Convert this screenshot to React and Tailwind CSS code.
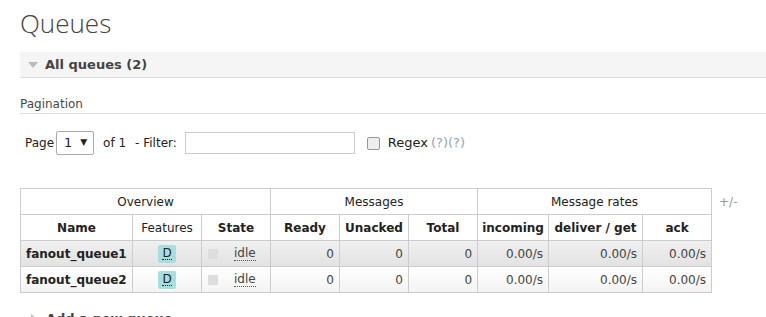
const font = { fontFamily: '"DejaVu Sans", Verdana, sans-serif' };

const queues = [
  { name: 'fanout_queue1', ready: 0, unacked: 0, total: 0, incoming: '0.00/s', deliver: '0.00/s', ack: '0.00/s' },
  { name: 'fanout_queue2', ready: 0, unacked: 0, total: 0, incoming: '0.00/s', deliver: '0.00/s', ack: '0.00/s' },
];

const cell = 'border border-[#ccc] h-[26px] px-[5px] whitespace-nowrap overflow-hidden';

export default function App() {
  return (
    <div className="w-[766px] h-[317px] overflow-hidden bg-white text-[#484848] text-[12px]" style={font}>
      <div className="pl-5">
        <h1 className="pt-[6px] h-[52px] text-[26px] font-light text-[#444] leading-[34px]" style={{ fontFamily: '"Open Sans", sans-serif' }}>
          Queues
        </h1>

        {/* All queues header */}
        <div className="h-[26px] bg-[#f5f5f5] border-b border-[#ddd] flex items-center pl-[8px]">
          <span className="w-0 h-0 border-l-[5px] border-r-[5px] border-t-[6px] border-l-transparent border-r-transparent border-t-[#bbb] mr-[7px]" />
          <span className="font-bold text-[13px] text-[#444]">All queues (2)</span>
        </div>

        {/* Pagination */}
        <div className="mt-[16px] h-[20px] border-b border-[#ddd] text-[12px] leading-[20px] text-[#484848]">
          Pagination
        </div>

        <div className="mt-[17px] flex items-center h-[24px] pl-[5px] text-[#222] text-[12px]">
          <span>Page</span>
          <div className="ml-[2px] w-[38px] h-[24px] border border-[#aaa] rounded-[2px] flex items-center justify-between pl-[7px] pr-[6px] text-[13px]">
            <span>1</span>
            <span className="text-[9px]">▼</span>
          </div>
          <span className="ml-[9px]">of 1</span>
          <span className="ml-[9px]">- Filter:</span>
          <div className="ml-[8px] w-[170px] h-[22px] border border-[#ccc]" />
          <div className="ml-[12px] w-[13px] h-[13px] border border-[#999] rounded-[2px] bg-[#eee]" />
          <span className="ml-[8px] text-[13px]">Regex</span>
          <span className="ml-[3px] text-[13px] text-[#94a3b8]">(?)(?)</span>
        </div>

        {/* Table */}
        <div className="mt-[33px] flex items-start">
          <table className="border-collapse table-fixed w-[691px] text-[12px] text-[#222]">
            <colgroup>
              <col className="w-[112px]" />
              <col className="w-[69px]" />
              <col className="w-[69px]" />
              <col className="w-[69px]" />
              <col className="w-[69px]" />
              <col className="w-[69px]" />
              <col className="w-[71px]" />
              <col className="w-[94px]" />
              <col className="w-[69px]" />
            </colgroup>
            <thead>
              <tr>
                <th colSpan={3} className={`${cell} font-normal text-center`}>Overview</th>
                <th colSpan={3} className={`${cell} font-normal text-center`}>Messages</th>
                <th colSpan={3} className={`${cell} font-normal text-center`}>Message rates</th>
              </tr>
              <tr>
                <th className={`${cell} font-bold text-center`}>Name</th>
                <th className={`${cell} font-normal text-center`}>Features</th>
                <th className={`${cell} font-bold text-center`}>State</th>
                <th className={`${cell} font-bold text-center`}>Ready</th>
                <th className={`${cell} font-bold text-center`}>Unacked</th>
                <th className={`${cell} font-bold text-center`}>Total</th>
                <th className="border border-[#ccc] h-[26px] px-0 font-bold text-center whitespace-nowrap">incoming</th>
                <th className={`${cell} font-bold text-center`}>deliver / get</th>
                <th className={`${cell} font-bold text-center`}>ack</th>
              </tr>
            </thead>
            <tbody>
              {queues.map((q, i) => (
                <tr
                  key={q.name}
                  className={i === 0 ? 'bg-gradient-to-b from-[#f0f0f0] to-[#e2e2e2]' : 'bg-gradient-to-b from-[#ffffff] to-[#f3f3f3]'}
                >
                  <td className={`${cell} font-bold`}>{q.name}</td>
                  <td className={`${cell} text-center`}>
                    <span className="inline-flex items-center justify-center w-[18px] h-[18px] bg-[#a9dede] rounded-[2px] align-middle">
                      <span className="border-b border-dotted border-[#222] leading-[12px] text-[#222]">D</span>
                    </span>
                  </td>
                  <td className={cell}>
                    <div className="flex items-center">
                      <span className="w-[10px] h-[10px] bg-[#ddd] ml-[1px]" />
                      <span className="ml-[16px] border-b border-dotted border-[#555] leading-[13px] text-[#444]">idle</span>
                    </div>
                  </td>
                  <td className={`${cell} text-right text-[#444]`}>{q.ready}</td>
                  <td className={`${cell} text-right text-[#444]`}>{q.unacked}</td>
                  <td className={`${cell} text-right text-[#444]`}>{q.total}</td>
                  <td className={`${cell} text-right text-[#444]`}>{q.incoming}</td>
                  <td className={`${cell} text-right text-[#444]`}>{q.deliver}</td>
                  <td className={`${cell} text-right text-[#444]`}>{q.ack}</td>
                </tr>
              ))}
            </tbody>
          </table>
          <span className="ml-[7px] mt-[5px] text-[12px] text-[#999]">+/-</span>
        </div>

        {/* Add a new queue */}
        <div className="mt-[16px] flex items-center pl-[11px]">
          <span className="w-0 h-0 border-t-[5px] border-b-[5px] border-l-[6px] border-t-transparent border-b-transparent border-l-[#bbb] mr-[9px]" />
          <span className="font-bold text-[13px] text-[#444]">Add a new queue</span>
        </div>
      </div>
    </div>
  );
}
